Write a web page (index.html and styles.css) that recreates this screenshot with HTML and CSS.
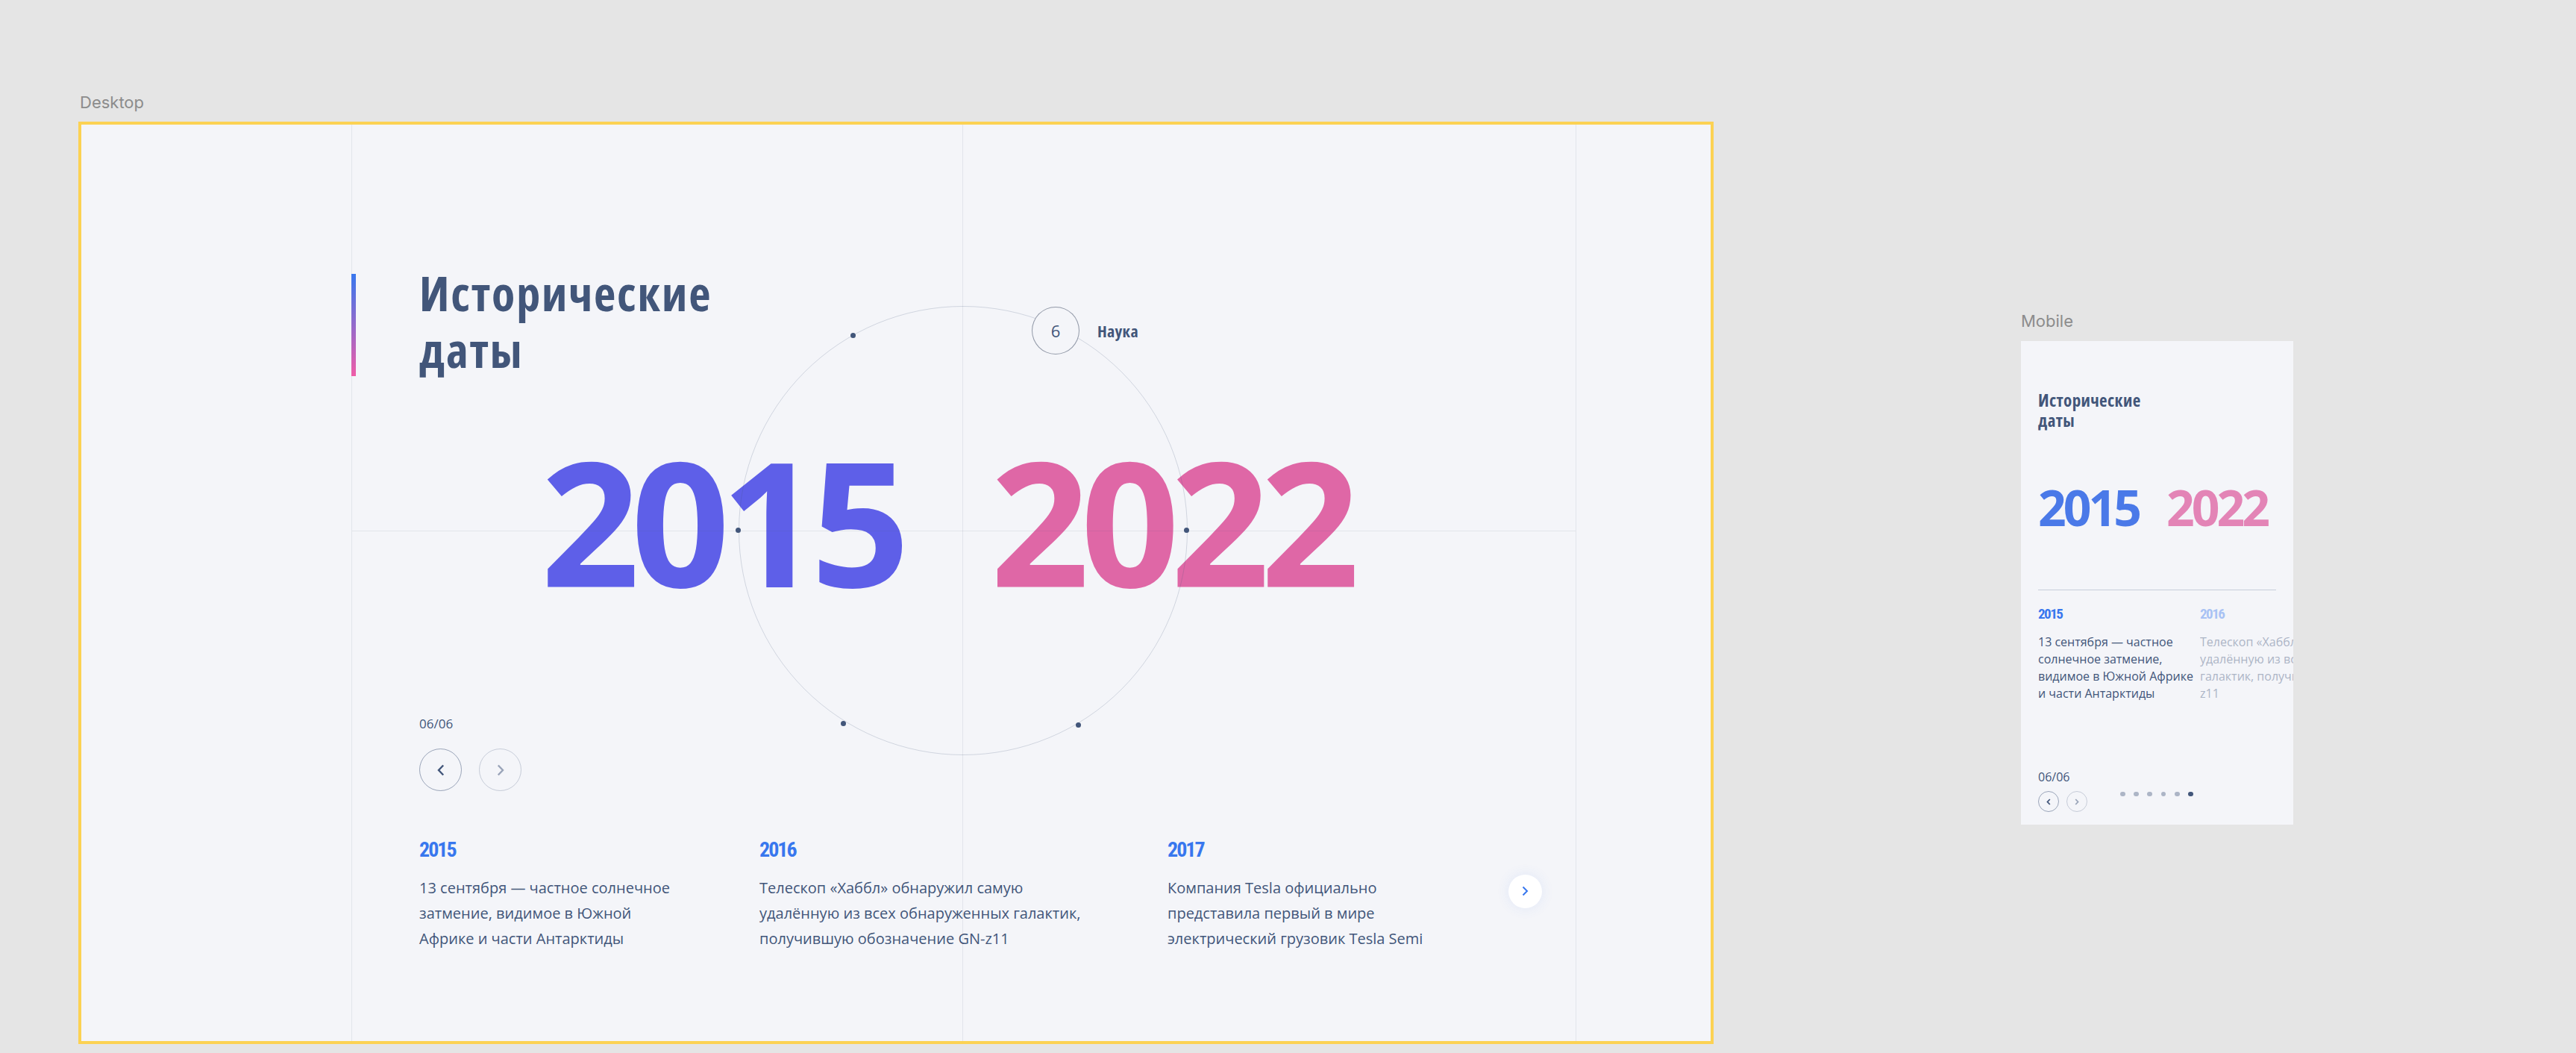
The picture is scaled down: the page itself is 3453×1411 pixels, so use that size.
FILE: index.html
```html
<!DOCTYPE html>
<html lang="ru">
<head>
<meta charset="utf-8">
<title>Исторические даты</title>
<link rel="stylesheet" href="styles.css">
</head>
<body>
<div class="board">
  <section class="artboard artboard--desktop">
    <div class="artboard__label">Desktop</div>
    <div class="desk">
      <div class="desk__container">
        <header class="desk__header">
          <span class="desk__bar"></span>
          <h1 class="desk__title">Исторические<br>даты</h1>
        </header>

        <div class="desk__years">
          <span class="desk__from">2015</span>
          <span class="desk__to">2022</span>
        </div>

        <div class="orbit">
          <span class="orbit__dot orbit__dot--a"></span>
          <span class="orbit__dot orbit__dot--b"></span>
          <span class="orbit__dot orbit__dot--c"></span>
          <span class="orbit__dot orbit__dot--d"></span>
          <span class="orbit__dot orbit__dot--e"></span>
          <div class="orbit__active"><span class="orbit__num">6</span><span class="orbit__name">Наука</span></div>
        </div>

        <div class="desk__count">06/06</div>
        <div class="desk__btns">
          <button class="round round--on" aria-label="Назад"><svg width="10" height="16" viewBox="0 0 10 16"><path d="M8.2 1.5 L2 8 L8.2 14.5" fill="none" stroke="#42567A" stroke-width="2.4"/></svg></button>
          <button class="round round--off" aria-label="Вперёд"><svg width="10" height="16" viewBox="0 0 10 16"><path d="M1.8 1.5 L8 8 L1.8 14.5" fill="none" stroke="#42567A" stroke-width="2.4"/></svg></button>
        </div>

        <div class="desk__slides">
          <article class="slide slide--s">
            <h3 class="slide__year">2015</h3>
            <p class="slide__text">13 сентября — частное солнечное<br>затмение, видимое в Южной<br>Африке и части Антарктиды</p>
          </article>
          <article class="slide slide--l">
            <h3 class="slide__year">2016</h3>
            <p class="slide__text">Телескоп «Хаббл» обнаружил самую<br>удалённую из всех обнаруженных галактик,<br>получившую обозначение GN-z11</p>
          </article>
          <article class="slide slide--s">
            <h3 class="slide__year">2017</h3>
            <p class="slide__text">Компания Tesla официально<br>представила первый в мире<br>электрический грузовик Tesla Semi</p>
          </article>
        </div>
        <button class="next" aria-label="Следующий"><svg width="9" height="14" viewBox="0 0 9 14"><path d="M1.5 1.5 L7 7 L1.5 12.5" fill="none" stroke="#3877EE" stroke-width="2"/></svg></button>
      </div>
    </div>
  </section>

  <section class="artboard artboard--mobile">
    <div class="artboard__label">Mobile</div>
    <div class="mob">
      <h2 class="mob__title">Исторические<br>даты</h2>
      <div class="mob__years"><span class="mob__from">2015</span><span class="mob__to">2022</span></div>
      <div class="mob__sep"></div>
      <div class="mob__slides">
        <article class="mslide">
          <h3 class="mslide__year">2015</h3>
          <p class="mslide__text">13 сентября — частное<br>солнечное затмение,<br>видимое в Южной Африке<br>и части Антарктиды</p>
        </article>
        <article class="mslide mslide--dim">
          <h3 class="mslide__year">2016</h3>
          <p class="mslide__text">Телескоп «Хаббл» обнаружил<br>удалённую из всех<br>галактик, получившую<br>z11</p>
        </article>
      </div>
      <div class="mob__nav">
        <div class="mob__ctrl">
          <div class="mob__count">06/06</div>
          <div class="mob__btns">
            <button class="mround mround--on" aria-label="Назад"><svg width="6" height="9" viewBox="0 0 6 9"><path d="M4.8 1 L1.5 4.5 L4.8 8" fill="none" stroke="#42567A" stroke-width="1.8"/></svg></button>
            <button class="mround mround--off" aria-label="Вперёд"><svg width="6" height="9" viewBox="0 0 6 9"><path d="M1.2 1 L4.5 4.5 L1.2 8" fill="none" stroke="#42567A" stroke-width="1.8"/></svg></button>
          </div>
        </div>
        <div class="mob__dots">
          <span class="mdot"></span><span class="mdot"></span><span class="mdot"></span><span class="mdot"></span><span class="mdot"></span><span class="mdot mdot--on"></span>
        </div>
      </div>
    </div>
  </section>
</div>
</body>
</html>
```
FILE: styles.css
```css
:root {
  --f-main: "Open Sans", "Noto Sans", sans-serif;
  --f-num: "Noto Sans", "Open Sans", sans-serif;
  --f-cond: Roboto, "Open Sans", sans-serif;
  --ink: #42567A;
  --line: rgba(66, 86, 122, 0.1);
}

* { box-sizing: border-box; margin: 0; padding: 0; }

body {
  width: 3453px;
  height: 1411px;
  overflow: hidden;
  background: #e5e5e5;
  font-family: var(--f-main);
  color: var(--ink);
}

button { border: none; background: none; cursor: pointer; display: flex; align-items: center; justify-content: center; }

.board { display: flex; align-items: flex-start; }

.artboard__label {
  font-family: Inter, "Noto Sans", sans-serif;
  font-size: 22px;
  line-height: 22px;
  color: #8c8c8c;
}

/* ---------- desktop ---------- */
.artboard--desktop { margin-left: 105px; margin-top: 126px; }
.artboard--desktop .artboard__label { margin-bottom: 15px; margin-left: 2px; }

.desk {
  width: 2192px;
  height: 1236px;
  border: 4px solid #fcd253;
  background: #F4F5F9;
  overflow: hidden;
}

.desk__container {
  position: relative;
  margin-left: 362px;
  width: 1642px;
  height: 100%;
  border-left: 1px solid var(--line);
  border-right: 1px solid var(--line);
  padding-left: 90px;
  display: flex;
  flex-direction: column;
  align-items: flex-start;
}
.desk__container::before {
  content: "";
  position: absolute;
  left: 818px; top: 0; bottom: 0;
  width: 1px;
  background: var(--line);
  z-index: 3;
}
.desk__container::after {
  content: "";
  position: absolute;
  left: 0; right: 0; top: 544px;
  height: 1px;
  background: var(--line);
  z-index: 3;
}

.desk__header { display: flex; margin-top: 188px; margin-left: -91px; }
.desk__bar {
  flex: none;
  width: 6px;
  height: 137px;
  margin-top: 12px;
  background: linear-gradient(180deg, #3877EE 0%, #EF5DA8 100%);
}
.desk__title {
  margin-left: 85px;
  font-size: 64px;
  line-height: 76px;
  font-weight: 700;
  font-stretch: 75%;
  letter-spacing: 1.9px;
  color: var(--ink);
  white-space: nowrap;
}

.orbit {
  position: absolute;
  left: 517.5px;
  top: 243px;
  width: 602px;
  height: 602px;
  border: 1px solid rgba(66, 86, 122, 0.2);
  border-radius: 50%;
  z-index: 3;
}
.orbit__dot {
  position: absolute;
  width: 7px; height: 7px;
  margin: -4.5px 0 0 -4.5px;
  border-radius: 50%;
  background: var(--ink);
}
.orbit__dot--a { left: 0; top: 300px; }
.orbit__dot--b { left: 601px; top: 300px; }
.orbit__dot--c { left: 153.5px; top: 39px; }
.orbit__dot--d { left: 455.5px; top: 561px; }
.orbit__dot--e { left: 140.5px; top: 559px; }

.orbit__active {
  position: absolute;
  left: 392.5px;
  top: 0;
  display: flex;
  align-items: center;
}
.orbit__num {
  width: 64px; height: 64px;
  border: 1px solid rgba(48, 62, 88, 0.5);
  border-radius: 50%;
  background: #F4F5F9;
  display: flex; align-items: center; justify-content: center;
  font-size: 22px;
  color: var(--ink);
}
.orbit__name {
  margin-left: 24px;
  font-size: 22px;
  font-weight: 700;
  font-stretch: 75%;
  letter-spacing: 0.3px;
  color: var(--ink);
}

.desk__years {
  position: absolute;
  left: 253px;
  top: 414px;
  display: flex;
  gap: 120px;
  font-family: var(--f-num);
  font-size: 232px;
  line-height: 232px;
  font-weight: 700;
  letter-spacing: -12px;
  z-index: 1;
}
.desk__from { color: #5e5fe8; }
.desk__to { color: #df67a6; }

.desk__count {
  margin-top: 452px;
  font-size: 17px;
  line-height: 22px;
  color: var(--ink);
}
.desk__btns { display: flex; gap: 23px; margin-top: 22px; }
.round {
  width: 57px; height: 57px;
  border-radius: 50%;
  border: 1px solid rgba(66, 86, 122, 0.5);
}
.round--off { opacity: 0.5; }

.desk__slides { display: flex; gap: 91px; margin-top: 62px; }
.slide { flex: none; }
.slide--s { width: 365px; }
.slide--l { width: 456px; }
.slide__year {
  font-family: var(--f-cond);
  font-stretch: 75%;
  font-size: 28px;
  line-height: 34px;
  font-weight: 700;
  letter-spacing: -2px;
  color: #3877EE;
}
.slide__text {
  margin-top: 17px;
  font-size: 20px;
  line-height: 34px;
  color: var(--ink);
  white-space: nowrap;
}

.next {
  position: absolute;
  left: 1549.5px;
  top: 1004.5px;
  width: 45px; height: 45px;
  border-radius: 50%;
  background: #fff;
  box-shadow: 0 0 17px rgba(56, 119, 238, 0.1);
}

/* ---------- mobile ---------- */
.artboard--mobile { margin-left: 412px; margin-top: 419px; }
.artboard--mobile .artboard__label { margin-bottom: 16px; }

.mob {
  width: 365px;
  height: 648px;
  background: #F4F5F9;
  overflow: hidden;
  padding: 0 23px;
  display: flex;
  flex-direction: column;
}
.mob__title {
  margin-top: 66px;
  font-size: 23px;
  line-height: 27px;
  font-weight: 700;
  font-stretch: 75%;
  letter-spacing: 0.4px;
  color: var(--ink);
}
.mob__years {
  margin-top: 69px;
  display: flex;
  gap: 37px;
  font-family: var(--f-num);
  font-size: 66px;
  line-height: 66px;
  font-weight: 700;
  letter-spacing: -4px;
}
.mob__from { color: #4a79e8; }
.mob__to { color: #e384b6; }
.mob__sep { margin-top: 78px; height: 1px; background: #c7cdd9; flex: none; }

.mob__slides { display: flex; gap: 28px; margin-top: 21px; }
.mslide { flex: none; width: 189px; }
.mslide__year {
  font-family: var(--f-cond);
  font-stretch: 75%;
  font-size: 19px;
  line-height: 22px;
  font-weight: 700;
  letter-spacing: -1.5px;
  color: #3877EE;
}
.mslide__text {
  margin-top: 15px;
  font-size: 16px;
  line-height: 23px;
  color: var(--ink);
  white-space: nowrap;
}
.mslide--dim { opacity: 0.4; }

.mob__nav { margin-top: 90px; display: flex; align-items: flex-end; }
.mob__count { font-size: 16px; line-height: 20px; }
.mob__btns { display: flex; gap: 10px; margin-top: 9px; }
.mround {
  width: 28px; height: 28px;
  border-radius: 50%;
  border: 1px solid rgba(66, 86, 122, 0.5);
}
.mround--off { opacity: 0.5; }
.mob__dots { display: flex; gap: 11.4px; margin-left: 44px; margin-bottom: 20.6px; }
.mdot { width: 6.8px; height: 6.8px; border-radius: 50%; background: var(--ink); opacity: 0.4; }
.mdot--on { opacity: 1; }
```
